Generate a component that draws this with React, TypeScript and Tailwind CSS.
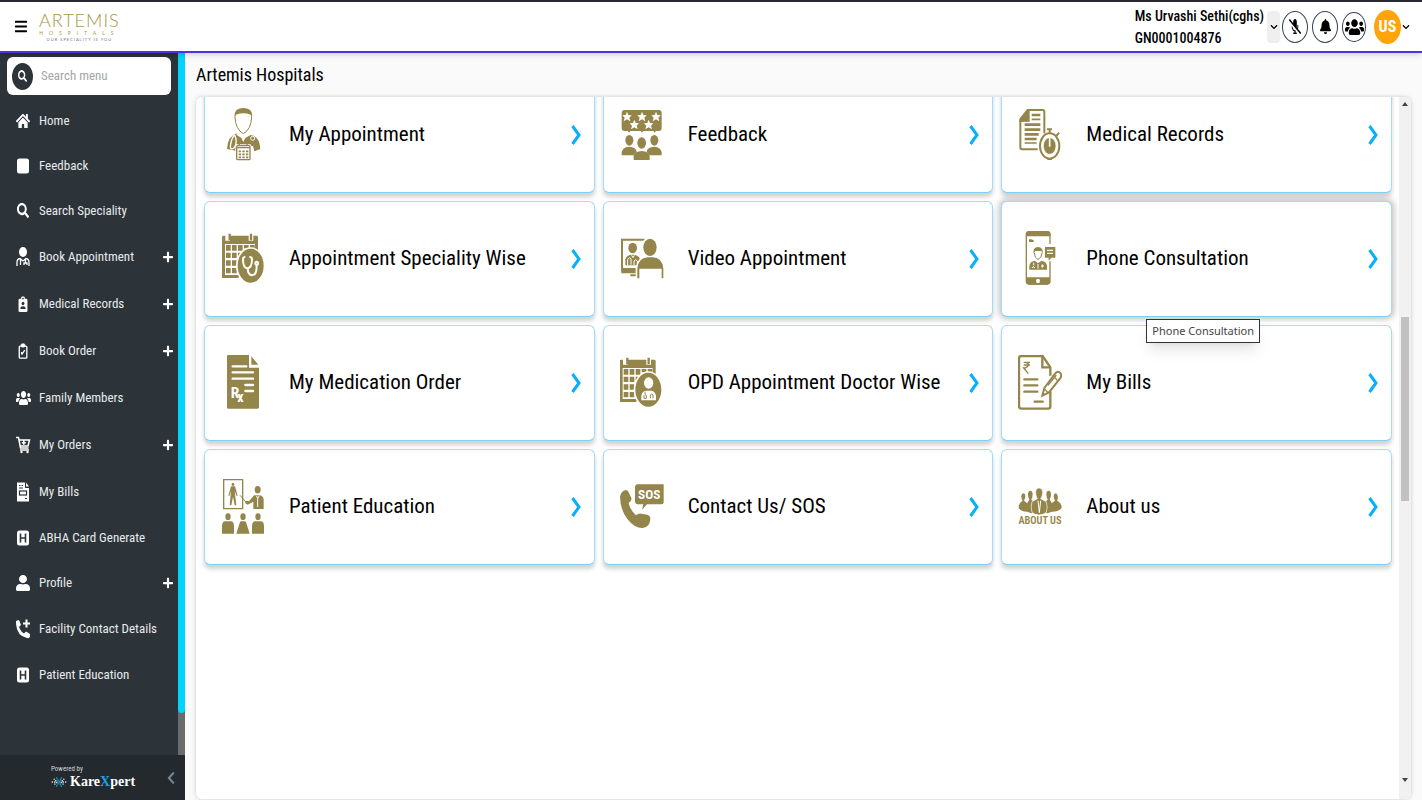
import React, { useState } from "react";
import {
  FaBars,
  FaBell,
  FaChevronDown,
  FaChevronLeft,
  FaHome,
  FaMicrophoneSlash,
  FaPlus,
  FaSearch,
  FaUser,
  FaUsers,
} from "react-icons/fa";

const GOLD = "#94854a";

// ---------- sidebar icons ----------

const SquareIcon = () => (
  <svg viewBox="0 0 14 16" className="h-4 w-3.5" fill="white">
    <rect x="1" y="0.5" width="12" height="15" rx="2.5" />
  </svg>
);

const HospitalIcon = () => (
  <svg viewBox="0 0 14 16" className="h-4 w-3.5">
    <rect x="1" y="0.5" width="12" height="15" rx="2.5" fill="white" />
    <path d="M4.5 3.5v9M9.5 3.5v9M4.5 8h5" stroke="#2c343a" strokeWidth="1.6" fill="none" />
  </svg>
);

const DoctorIcon = () => (
  <svg viewBox="0 0 14 20" className="h-5 w-3.5" fill="white">
    <ellipse cx="7" cy="5" rx="4" ry="5" />
    <path
      d="M1 19v-3.500q0-3.500 3-4l3 2.500 3-2.500q3 .5 3 4V19M4.500 12v6M9.500 12v4M8 18v-2h3v2"
      fill="none"
      stroke="white"
      strokeWidth="1.300"
    />
  </svg>
);

const BadgeIcon = () => (
  <svg viewBox="0 0 14 18" className="h-4 w-3.5">
    <rect x="2" y="3" width="10" height="15" rx="1.500" fill="white" />
    <rect x="5" y="0.500" width="4" height="4" rx="1.500" fill="white" />
    <circle cx="7" cy="3" r="0.900" fill="#2c343a" />
    <ellipse cx="7" cy="8.500" rx="1.600" ry="2" fill="#2c343a" />
    <path d="M4 14.500q0-3 3-3t3 3z" fill="#2c343a" />
  </svg>
);

const ClipboardIcon = () => (
  <svg viewBox="0 0 14 18" className="h-4 w-3.5" fill="none" stroke="white">
    <rect x="2.800" y="3.500" width="8.500" height="13.500" rx="1" strokeWidth="1.500" />
    <rect x="5" y="1" width="4" height="3.500" rx="1" fill="white" />
    <path d="M5.500 13l3.500-5M5.500 10v3" strokeWidth="1.400" />
  </svg>
);

const CartIcon = () => (
  <svg viewBox="0 0 16 18" className="h-[18px] w-4" fill="none" stroke="white" strokeWidth="1.500">
    <path d="M1 1.500h2.500l2 10.500h8M4 4h10.500l-1.500 6H5.500M8.800 4.800v4M6.800 6.800h4" />
    <path d="M5 14h9" />
    <circle cx="6.500" cy="16" r="1.200" fill="white" stroke="none" />
    <circle cx="12.500" cy="16" r="1.200" fill="white" stroke="none" />
  </svg>
);

const BillIcon = () => (
  <svg viewBox="0 0 14 20" className="h-5 w-3.5">
    <path d="M1 0.500h8v5.500h4V19.500H1z M10 0.500l3 4h-3z" fill="white" />
    <path d="M3 3.500h1.500M5.500 3.500H7M3 6h4M9 16.500h2" stroke="#2c343a" strokeWidth="1.200" />
    <rect x="3.500" y="9" width="7" height="4" fill="none" stroke="#2c343a" strokeWidth="1.200" />
  </svg>
);

const PhonePlusIcon = () => (
  <svg viewBox="0 0 16 20" className="h-5 w-4" fill="white">
    <path d="M1 2l3-1 2 5-2 2q2 5 5 6.500l2-2 4 2.500v3q-1 1.500-3 1Q2 17 1 5z" />
    <path d="M11.500 0.500v8M8 4.500h7" stroke="white" strokeWidth="2" />
  </svg>
);

const stretched = { preserveAspectRatio: "none", color: "white" };

const menuItems = [
  { label: "Home", icon: <FaHome {...stretched} className="h-4 w-3.5" />, tall: false, plus: false },
  { label: "Feedback", icon: <SquareIcon />, tall: false, plus: false },
  { label: "Search Speciality", icon: <FaSearch {...stretched} className="h-[15px] w-3" />, tall: false, plus: false },
  { label: "Book Appointment", icon: <DoctorIcon />, tall: true, plus: true },
  { label: "Medical Records", icon: <BadgeIcon />, tall: true, plus: true },
  { label: "Book Order", icon: <ClipboardIcon />, tall: true, plus: true },
  { label: "Family Members", icon: <FaUsers {...stretched} className="h-4 w-[15px]" />, tall: true, plus: false },
  { label: "My Orders", icon: <CartIcon />, tall: true, plus: true },
  { label: "My Bills", icon: <BillIcon />, tall: true, plus: false },
  { label: "ABHA Card Generate", icon: <HospitalIcon />, tall: false, plus: false },
  { label: "Profile", icon: <FaUser {...stretched} className="h-4 w-3.5" />, tall: false, plus: true },
  { label: "Facility Contact Details", icon: <PhonePlusIcon />, tall: true, plus: false },
  { label: "Patient Education", icon: <HospitalIcon />, tall: false, plus: false },
];

// ---------- tile icons ----------

const AppointmentArt = () => (
  <svg viewBox="63 51 132 168" className="h-14 w-11 shrink-0" fill={GOLD}>
    <path d="M104 84Q100 54 130 54T156 84L152 74Q130 66 108 74z" />
    <path d="M105 80Q106 118 130 131Q154 118 155 80" fill="none" stroke={GOLD} strokeWidth="3" />
    <path d="M110 135l16 10 4 12 4-12 18-10q27 4 29 42l-18 7-4-16h-39l-5 16-34-7q2-38 29-47z" />
    <path d="M104 134q10 24-2 40q-14 8-10-12t12-28" fill="none" stroke="white" strokeWidth="4" />
    <path d="M124 138l6 12 7-12" fill="none" stroke="white" strokeWidth="4" />
    <circle cx="158" cy="145" r="6" fill="none" stroke="white" strokeWidth="3" />
    <rect x="106" y="163" width="47" height="49" rx="3" fill="white" />
    <rect x="110" y="167" width="40" height="42" rx="3" fill="none" stroke={GOLD} strokeWidth="4" />
    <path d="M110 173h40M118 158v10M141 158v10" stroke={GOLD} strokeWidth="4" />
    <path d="M116 184h7M127 184h7M138 184h7M116 193h7M127 193h7M138 193h7M116 202h7M127 202h7M138 202h7" stroke={GOLD} strokeWidth="5" />
  </svg>
);

const star = "l4 10 10 1-7 7 3 11-10-6-10 6 3-11-7-7 10-1z";

const FeedbackArt = () => (
  <svg viewBox="59 51 132 168" className="h-14 w-11 shrink-0" fill={GOLD}>
    <rect x="64" y="60" width="120" height="63" rx="9" />
    <path d="M80 120h12l-6 8zM119 120h12l-6 8zM157 120h12l-6 8z" />
    <path
      d={`M80 65${star}M125 65${star}M167 65${star}M102 89${star}M145 89${star}`}
      fill="white"
    />
    <ellipse cx="87" cy="151" rx="12" ry="16" />
    <ellipse cx="162" cy="151" rx="12" ry="16" />
    <path d="M64 196v-9q2-15 22-17 22 1 23 15l-9 11zM184 196v-9q-2-15-22-17-22 1-23 15l9 11z" />
    <ellipse cx="124" cy="159" rx="13" ry="17" />
    <path d="M100 210v-13q4-13 24-14 21 1 24 14v13z" />
  </svg>
);

const RecordsArt = () => (
  <svg viewBox="57 51 132 168" className="h-14 w-11 shrink-0" fill="none" stroke={GOLD} strokeWidth="6">
    <path d="M116 178H69q-5 0-5-6V92l24-32h43q5 0 5 6v64" />
    <path d="M64 93V87l22-27h3v32z" fill={GOLD} />
    <path d="M98 75h26M77 104h47M77 119h47M77 133h42M77 147h36" strokeWidth="8" />
    <path d="M98 88h26M77 159h36" strokeWidth="5" />
    <ellipse cx="152" cy="168" rx="29" ry="38" fill="white" />
    <ellipse cx="152" cy="168" rx="19" ry="25" fill={GOLD} stroke="white" strokeWidth="2" />
    <path d="M152 170v-26" stroke="white" strokeWidth="5" />
    <path d="M144 118h15M152 118v13M171 139l9-11M145 207h14" />
  </svg>
);

// calendar with a round badge, shared by two tiles
const CalendarArt = ({ viewBox, children }: { viewBox: string; children: React.ReactNode }) => (
  <svg viewBox={viewBox} className="h-14 w-11 shrink-0" fill={GOLD}>
    <path d="M66 564V441q0-4 5-4h98q5 0 5 4v70l-60 53z" />
    <path d="M75 462h90v30l-48 63H75z" fill="white" />
    <path d="M83 430v22M153 430v22" stroke="white" strokeWidth="14" />
    <path d="M89 431v20M153 431v20" stroke={GOLD} strokeWidth="7" />
    <path
      d="M78 465h14v17H78zM96 465h14v17H96zM114 465h14v17h-14zM132 465h14v10h-14zM150 465h14v10h-14zM78 488h14v16H78zM96 488h14v16H96zM114 488h9v10h-9zM78 511h14v16H78zM96 511h14v16H96zM78 534h14v16H78zM96 534h14v16H96z"
    />
    <ellipse cx="152" cy="527" rx="44" ry="55" fill="white" />
    <ellipse cx="152" cy="527" rx="39" ry="51" />
    {children}
  </svg>
);

const SpecialityArt = () => (
  <CalendarArt viewBox="63 423 132 168">
    <g fill="none" stroke="white" strokeWidth="6">
      <path d="M136 501q-8 0-7 7 0 26 13 27 14-1 14-27 0-7-8-7" />
      <path d="M143 536q1 20 14 20 13-1 13-29" />
      <ellipse cx="170" cy="520" rx="4" ry="5" />
    </g>
  </CalendarArt>
);

const OpdArt = () => (
  <CalendarArt viewBox="67 423 132 168">
    <ellipse cx="153" cy="507" rx="14" ry="17" fill="white" />
    <path d="M131 559v-12q1-15 14-17h17q12 3 13 17v12z" fill="white" />
    <path d="M142 533v7M139 553v-8q3-7 7 0v8zM158 553v-10q4-6 8 0v10" fill="none" stroke={GOLD} strokeWidth="3" />
  </CalendarArt>
);

const VideoArt = () => (
  <svg viewBox="59 423 132 168" className="h-14 w-11 shrink-0" fill={GOLD}>
    <path d="M65 449h84v90H65z" fill="none" stroke={GOLD} strokeWidth="6" />
    <path d="M63 534h52v16H63zM90 553h17v6H90z" />
    <ellipse cx="97" cy="474" rx="13" ry="16" />
    <path d="M75 526v-18q3-14 21-14t23 12v20z" />
    <path d="M82 525v-17l6-5 4 3v18M101 525v-12q5-8 10 0v7M94 496l4 7 4-7" fill="none" stroke="white" strokeWidth="3" />
    <ellipse cx="149" cy="473" rx="26" ry="33" fill="white" />
    <path d="M106 570v-35q3-35 34-37h20q34 2 38 37v35z" fill="white" />
    <ellipse cx="149" cy="472" rx="20" ry="26" />
    <path d="M111 565v-29q2-32 31-34h16q29 2 31 34v29h-5v-29h-67v29z" />
  </svg>
);

const PhoneArt = () => (
  <svg viewBox="57 423 132 168" className="h-14 w-11 shrink-0" fill={GOLD}>
    <rect x="82" y="425" width="71" height="157" rx="8" fill="none" stroke={GOLD} strokeWidth="4" />
    <path d="M82 439v-7q1-8 8-8h56q7 0 8 8v7zM82 562h71v14q-1 7-8 8H90q-7-1-8-8z" />
    <ellipse cx="117" cy="573" rx="6" ry="7" fill="white" />
    <path d="M90 448h7l7 3v5H90z" />
    <path d="M149 462h9v52h-9z" fill="white" />
    <path d="M138 471h31v32h-12l-8 9v-9h-11z" />
    <path d="M144 481h18M144 490h18" stroke="white" strokeWidth="4" />
    <path d="M104 491q-3-20 13-20t14 20l-4-8h-18z" />
    <path d="M106 489q1 15 11 20 11-5 12-20" fill="none" stroke={GOLD} strokeWidth="3" />
    <path d="M91 539v-11q1-13 16-16l10 8 11-8q15 3 16 16v11z" />
    <path d="M104 518v8M99 534q3-9 9 0M117 522v14M126 528h9M130 523v10" stroke="white" strokeWidth="3" fill="none" />
  </svg>
);

const MedicationArt = () => (
  <svg viewBox="63 108 132 168" className="h-14 w-11 shrink-0" fill={GOLD}>
    <path d="M84 108h63v38h30v119q0 4-4 4H84q-3 0-3-4V112q0-4 3-4z" />
    <path d="M154 112l21 25h-21z" />
    <path d="M98 142h41M98 160h61M98 179h61M136 198h23M136 216h23" stroke="white" strokeWidth="7" strokeLinecap="round" />
    <text x="92" y="236" fill="white" fontSize="46" fontWeight="700" fontFamily="Roboto Condensed, Roboto, sans-serif">
      R<tspan dx="-6" dy="12" fontSize="42">x</tspan>
    </text>
  </svg>
);

const BillsArt = () => (
  <svg viewBox="57 108 132 168" className="h-14 w-11 shrink-0" fill="none" stroke={GOLD} strokeWidth="7">
    <path d="M154 170v-25l-23-34H67q-7 0-7 7v144q0 7 7 7h80q7 0 7-7v-45" />
    <path d="M130 112v33h23" />
    <path d="M74 130h19M74 138h19M79 130q20 5 0 17h-5l14 17" strokeWidth="4" />
    <path d="M76 181h39M76 199h39M76 218h39M107 248h24" strokeWidth="7" strokeLinecap="round" />
    <path d="M136 207l34-45q6-7 13-1 6 7 2 15l-35 44-20 10z" fill="white" strokeWidth="6" />
    <path d="M147 199l25-31M162 169l13 15M135 209l13 12" strokeWidth="4" />
  </svg>
);

const EducationArt = () => (
  <svg viewBox="63 480 132 168" className="h-14 w-11 shrink-0" fill={GOLD}>
    <path d="M71 482h57v87H71z" fill="none" stroke={GOLD} strokeWidth="4" />
    <ellipse cx="99" cy="496" rx="4" ry="5" />
    <path d="M93 502h12l8 28-3 1-6-15 5 43h-5l-5-26-5 26h-5l4-43-5 15-3-1z" />
    <path d="M120 529l18 20" stroke={GOLD} strokeWidth="3" />
    <ellipse cx="173" cy="512" rx="9" ry="11" />
    <path d="M160 570v-22l-17 9-8-5 4-7 8 2 15-18h18q9 2 11 12v29z" />
    <path d="M169 530l4 8 5-8M173 538v26" stroke="white" strokeWidth="3" fill="none" />
    <ellipse cx="84" cy="593" rx="8" ry="10" />
    <ellipse cx="129" cy="593" rx="8" ry="10" />
    <ellipse cx="174" cy="593" rx="8" ry="10" />
    <path d="M66 644v-24q1-13 10-13h16q9 0 10 13v24zM156 644v-24q1-13 10-13h16q9 0 10 13v24zM109 644l11-35q2-2 4-2h10q2 0 4 2l11 35z" />
  </svg>
);

const SosArt = () => (
  <svg viewBox="59 480 132 168" className="h-14 w-11 shrink-0" fill={GOLD}>
    <path d="M112 496h78v54q0 6-6 6h-44l-15 16 4-16h-17q-8-1-8-9v-42q0-8 8-9z" />
    <path d="M59 535q2-20 18-22 7 1 10 11l6 13q2 8-8 15 4 20 22 37 9-9 20-4l14 2q9 3 9 12 0 24-23 28-24 1-46-27Q60 572 59 535z" />
    <text x="147" y="540" textAnchor="middle" fill="white" fontSize="40" fontWeight="700" fontFamily="Roboto Condensed, Roboto, sans-serif">
      SOS
    </text>
  </svg>
);

const AboutArt = () => (
  <svg viewBox="57 480 132 168" className="h-14 w-11 shrink-0" fill={GOLD}>
    <path d="M73 523q6 0 6 8t-4 14l9 7 4 26q-24 1-29-12 0-15 12-21-5-6-4-14 1-8 6-8zM170 523q-6 0-6 8t4 14l-9 7-4 26q26 1 33-12 0-15-14-21 4-6 2-14-1-8-6-8z" />
    <path d="M94 515q7 1 7 11t-4 16l7 6v35q-20-1-22-11 0-22 9-30-4-6-4-16t7-11zM149 515q-7 1-7 11t4 16l-7 6v35q20-1 22-11 0-22-9-30 4-6 4-16t-7-11z" />
    <path
      d="M121 507q11 1 10 14 0 11-6 18l17 9q5 16 0 32-9 8-22 8t-21-8q-5-16 0-32l16-9q-5-7-5-18-1-13 11-14z"
      stroke="white"
      strokeWidth="2"
    />
    <path d="M117 545l4 36 4-36" fill="none" stroke="white" strokeWidth="3" />
    <text x="123" y="616" textAnchor="middle" fontSize="31" fontWeight="600" fontFamily="Roboto Condensed, Roboto, sans-serif">
      ABOUT US
    </text>
  </svg>
);

const tiles = [
  { title: "My Appointment", icon: <AppointmentArt /> },
  { title: "Feedback", icon: <FeedbackArt /> },
  { title: "Medical Records", icon: <RecordsArt /> },
  { title: "Appointment Speciality Wise", icon: <SpecialityArt /> },
  { title: "Video Appointment", icon: <VideoArt /> },
  { title: "Phone Consultation", icon: <PhoneArt />, active: true },
  { title: "My Medication Order", icon: <MedicationArt /> },
  { title: "OPD Appointment Doctor Wise", icon: <OpdArt /> },
  { title: "My Bills", icon: <BillsArt /> },
  { title: "Patient Education", icon: <EducationArt /> },
  { title: "Contact Us/ SOS", icon: <SosArt /> },
  { title: "About us", icon: <AboutArt /> },
];

// ---------- layout ----------

const Header = () => (
  <header className="z-10 flex h-[53px] shrink-0 items-center border-t-2 border-b-2 border-t-[#2b2735] border-b-[#5030e0] bg-white pr-3 pl-[15px] shadow-md">
    <button aria-label="Toggle menu">
      <FaBars preserveAspectRatio="none" className="h-[15px] w-3" />
    </button>
    <div className="ml-3 flex flex-col items-center text-[#a8973c]">
      <span className="font-['Lato'] text-[18px] leading-[18px] font-light tracking-[1px]">ARTEMIS</span>
      <span className="font-['Lato'] text-[5px] leading-[8px] tracking-[6px]">HOSPITALS</span>
      <span className="font-['Lato'] text-[4px] leading-[6px] tracking-[1px] text-gray-500">OUR SPECIALITY IS YOU</span>
    </div>
    <div className="ml-auto text-sm leading-[22px] font-medium">
      <p>Ms Urvashi Sethi(cghs)</p>
      <p>GN0001004876</p>
    </div>
    <button aria-label="Switch patient" className="ml-[3px] flex h-8 w-[13px] items-center justify-center rounded-sm bg-[#efefef]">
      <FaChevronDown className="h-2 w-2" />
    </button>
    <div className="ml-[2px] flex items-center gap-1">
      <button aria-label="Microphone" className="flex h-8 w-[26px] items-center justify-center rounded-[50%] border border-gray-700">
        <FaMicrophoneSlash preserveAspectRatio="none" className="h-[15px] w-3" />
      </button>
      <button aria-label="Notifications" className="flex h-8 w-[26px] items-center justify-center rounded-[50%] border border-gray-700">
        <FaBell preserveAspectRatio="none" className="h-[15px] w-[11px]" />
      </button>
      <button aria-label="Family" className="flex h-[30px] w-6 items-center justify-center rounded-[50%] border border-gray-700">
        <FaUsers preserveAspectRatio="none" className="h-[18px] w-[19px]" />
      </button>
    </div>
    <button className="ml-2 flex items-center gap-px">
      <span className="flex h-[34px] w-[27px] items-center justify-center rounded-[50%] bg-[#ffa40b] text-base font-bold text-white">
        US
      </span>
      <FaChevronDown className="h-2 w-2" />
    </button>
  </header>
);

const Sidebar = () => {
  const [search, setSearch] = useState("");

  return (
    <aside className="flex w-[185px] shrink-0 flex-col bg-[#2c343a] text-[#e8eaeb]">
      <div className="flex min-h-0 flex-1">
        <div className="flex min-w-0 flex-1 flex-col">
          <label className="mx-[7px] mt-1 flex h-[38px] shrink-0 items-center gap-2 rounded-md bg-white pl-[5px]">
            <span className="flex h-[27px] w-[21px] shrink-0 items-center justify-center rounded-[50%] bg-[#2c343a]">
              <FaSearch preserveAspectRatio="none" className="h-3 w-[9px] text-white" />
            </span>
            <input
              aria-label="Search menu"
              placeholder="Search menu"
              value={search}
              onChange={(e) => setSearch(e.target.value)}
              className="w-full min-w-0 text-[13px] text-gray-700 outline-none placeholder:text-[#a6a6a6]"
            />
          </label>
          <nav className="mt-[3px] text-[13px]">
            {menuItems.map((item) => (
              <a
                key={item.label}
                href="#"
                className={`flex items-center pr-[5px] pl-[15px] ${item.tall ? "h-[47px]" : "h-[45px]"}`}
              >
                <span className="mr-2 flex w-4 justify-center">{item.icon}</span>
                <span className="whitespace-nowrap">{item.label}</span>
                {item.plus && <FaPlus preserveAspectRatio="none" className="ml-auto h-3 w-[10px] text-white" />}
              </a>
            ))}
          </nav>
        </div>
        {/* scroll track */}
        <div className="flex w-[7px] flex-col bg-[#6b6b6b]">
          <div className="h-[94%] rounded-b-full bg-[#00d5ff]" />
        </div>
      </div>
      <footer className="flex h-[45px] shrink-0 items-center justify-between bg-[#23292d] pr-[10px] pl-[51px]">
        <div>
          <p className="text-[7px] leading-[8px] text-gray-300">Powered by</p>
          <div className="flex items-center gap-[3px]">
            <svg viewBox="0 0 48 36" className="h-3 w-4" fill="none" strokeWidth="4">
              <path d="M2 18h14M8 8l10 10L8 28" stroke="#d5dadd" strokeDasharray="4 3" />
              <path d="M46 18H32M40 8L30 18l10 10" stroke="#d5dadd" strokeDasharray="4 3" />
              <path d="M16 4l8 14 8-14M16 32l8-14 8 14" stroke="#1aa0e0" strokeDasharray="5 2" />
            </svg>
            <span className="font-['Liberation_Serif',serif] text-sm leading-[18px] font-bold text-white">
              Kare<span className="text-[#14a4ee]">X</span>pert
            </span>
          </div>
        </div>
        <button aria-label="Collapse sidebar">
          <FaChevronLeft preserveAspectRatio="none" className="h-[14px] w-2 text-[#768794]" />
        </button>
      </footer>
    </aside>
  );
};

const Tile = ({ title, icon, active }: { title: string; icon: React.ReactNode; active?: boolean }) => (
  <div className="relative">
    <a
      href="#"
      className={`flex h-[116px] items-center rounded-md border border-[#a0ddf8] border-b-[#7fd0f5] bg-white pr-[13px] pl-4 text-black ${
        active ? "shadow-[0_0_6px_2px_rgba(0,0,0,0.25)]" : "shadow-[0_4px_4px_rgba(0,0,0,0.18)]"
      }`}
    >
      {icon}
      <span className="ml-6 flex-1 text-[21px] whitespace-nowrap">{title}</span>
      <svg viewBox="0 0 10 20" className="h-5 w-2.5" fill="none" stroke="#08b0fb" strokeWidth="3">
        <path d="M1.500 1l6.500 9-6.500 9" />
      </svg>
    </a>
    {active && (
      <div
        role="tooltip"
        className="absolute top-[118px] left-[145px] z-10 border border-[#333] bg-white px-[5px] font-['Noto_Sans',sans-serif] text-[11px] leading-[22px] whitespace-nowrap text-[#444] shadow-lg"
      >
        {title}
      </div>
    )}
  </div>
);

const App = () => {
  return (
    <div className="flex h-screen flex-col overflow-hidden bg-[#fafafa] font-['Roboto_Condensed','Roboto',sans-serif] text-black">
      <Header />
      <div className="flex min-h-0 flex-1">
        <Sidebar />
        <main className="flex min-w-0 flex-1 flex-col pr-[11px] pb-px pl-[11px]">
          <h1 className="flex h-11 shrink-0 items-center text-lg">Artemis Hospitals</h1>
          <section className="flex min-h-0 flex-1 overflow-hidden rounded-md bg-white shadow-[0_0_4px_rgba(0,0,0,0.2)]">
            {/* list is scrolled part way through its first row */}
            <div className="min-w-0 flex-1 overflow-hidden">
              <div className="-mt-5 grid grid-cols-3 gap-2 pr-[7px] pl-2">
                {tiles.map((tile) => (
                  <Tile key={tile.title} {...tile} />
                ))}
              </div>
            </div>
            <div className="flex w-3 flex-col items-center bg-[#f1f1f1] pt-[5px] pb-[17px]">
              <svg viewBox="0 0 6 4" className="h-1 w-1.5">
                <path d="M0 4l3-4 3 4z" fill="#444" />
              </svg>
              <div className="flex-[211]" />
              <div className="w-2 flex-[183] bg-[#c1c1c1]" />
              <div className="flex-[277]" />
              <svg viewBox="0 0 6 4" className="h-1 w-1.5">
                <path d="M0 0l3 4 3-4z" fill="#444" />
              </svg>
            </div>
          </section>
        </main>
      </div>
    </div>
  );
};

export default App;
